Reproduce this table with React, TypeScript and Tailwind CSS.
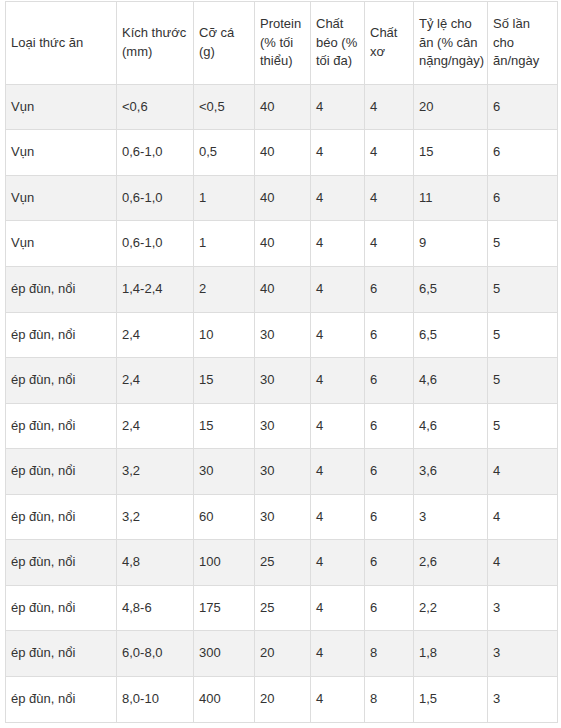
import React from "react"

const HEADERS = [
  "Loại thức ăn",
  "Kích thước (mm)",
  "Cỡ cá (g)",
  "Protein (% tối thiểu)",
  "Chất béo (% tối đa)",
  "Chất xơ",
  "Tỷ lệ cho ăn (% cân nặng/ngày)",
  "Số lần cho ăn/ngày",
]

const COL_WIDTHS = ["w-[111px]", "w-[77px]", "w-[61px]", "w-[56px]", "w-[54px]", "w-[49px]", "w-[74px]", "w-[70px]"]

const ROWS = [
  ["Vụn", "<0,6", "<0,5", "40", "4", "4", "20", "6"],
  ["Vụn", "0,6-1,0", "0,5", "40", "4", "4", "15", "6"],
  ["Vụn", "0,6-1,0", "1", "40", "4", "4", "11", "6"],
  ["Vụn", "0,6-1,0", "1", "40", "4", "4", "9", "5"],
  ["ép đùn, nổi", "1,4-2,4", "2", "40", "4", "6", "6,5", "5"],
  ["ép đùn, nổi", "2,4", "10", "30", "4", "6", "6,5", "5"],
  ["ép đùn, nổi", "2,4", "15", "30", "4", "6", "4,6", "5"],
  ["ép đùn, nổi", "2,4", "15", "30", "4", "6", "4,6", "5"],
  ["ép đùn, nổi", "3,2", "30", "30", "4", "6", "3,6", "4"],
  ["ép đùn, nổi", "3,2", "60", "30", "4", "6", "3", "4"],
  ["ép đùn, nổi", "4,8", "100", "25", "4", "6", "2,6", "4"],
  ["ép đùn, nổi", "4,8-6", "175", "25", "4", "6", "2,2", "3"],
  ["ép đùn, nổi", "6,0-8,0", "300", "20", "4", "8", "1,8", "3"],
  ["ép đùn, nổi", "8,0-10", "400", "20", "4", "8", "1,5", "3"],
]

const cell = "border border-[#dddddd] px-[5px] py-[13px] align-middle text-left font-normal"

export default function App() {
  return (
    <div className="min-h-screen bg-white pt-px pl-[5px] text-[13px] leading-[18.57px] text-[#333333] [font-family:'Liberation_Sans',Arial,sans-serif]">
      <table className="w-[552px] table-fixed border-collapse">
        <colgroup>
          {COL_WIDTHS.map((w) => (
            <col key={w} className={w} />
          ))}
        </colgroup>
        <thead>
          <tr>
            {HEADERS.map((h) => (
              <th key={h} className={cell}>{h}</th>
            ))}
          </tr>
        </thead>
        <tbody>
          {ROWS.map((row, i) => (
            <tr key={i} className={i % 2 === 0 ? "bg-[#f2f2f2]" : "bg-white"}>
              {row.map((v, j) => (
                <td key={j} className={cell}>{v}</td>
              ))}
            </tr>
          ))}
        </tbody>
      </table>
    </div>
  )
}
